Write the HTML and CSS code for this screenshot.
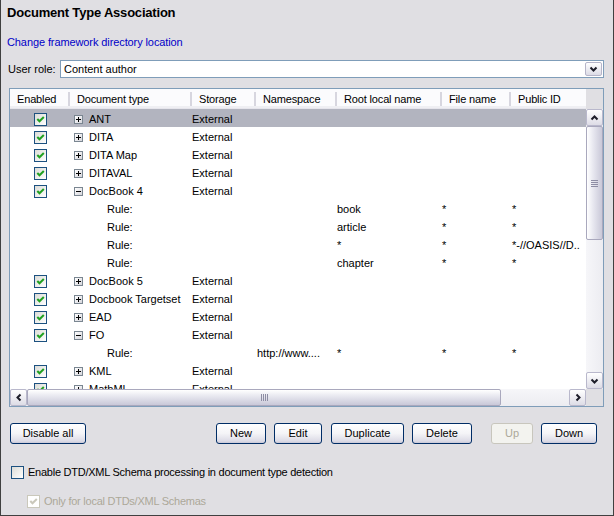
FILE: index.html
```html
<!DOCTYPE html>
<html>
<head>
<meta charset="utf-8">
<link rel="stylesheet" href="styles.css">
</head>
<body>
<div class="panel">
  <h1 class="title">Document Type Association</h1>
  <a class="link" href="#">Change framework directory location</a>
  <div class="role-row">
    <span class="role-label">User role:</span>
    <div class="combo">
      <span class="combo-text">Content author</span>
      <span class="combo-btn"><svg width="9" height="6" viewBox="0 0 9 6"><polyline points="1.5,1.5 4.5,4.5 7.5,1.5" fill="none" stroke="#1e1e2a" stroke-width="2"/></svg></span>
    </div>
  </div>

  <div class="table">
    <div class="header">
      <div class="hcell first">Enabled</div>
      <div class="hcell">Document type</div>
      <div class="hcell">Storage</div>
      <div class="hcell">Namespace</div>
      <div class="hcell">Root local name</div>
      <div class="hcell">File name</div>
      <div class="hcell">Public ID</div>
    </div>
    <div class="corner-top"></div>

    <div class="body">
      <div class="row sel"><div class="c en"><span class="cb"><svg viewBox="0 0 11 11"><path d="M2.3 5 L4.5 7.3 L8.8 3" /></svg></span></div><div class="c dt"><span class="exp plus"></span>ANT</div><div class="c st">External</div><div class="c"></div><div class="c"></div><div class="c"></div><div class="c"></div></div>
      <div class="row"><div class="c en"><span class="cb"><svg viewBox="0 0 11 11"><path d="M2.3 5 L4.5 7.3 L8.8 3" /></svg></span></div><div class="c dt"><span class="exp plus"></span>DITA</div><div class="c st">External</div><div class="c"></div><div class="c"></div><div class="c"></div><div class="c"></div></div>
      <div class="row"><div class="c en"><span class="cb"><svg viewBox="0 0 11 11"><path d="M2.3 5 L4.5 7.3 L8.8 3" /></svg></span></div><div class="c dt"><span class="exp plus"></span>DITA Map</div><div class="c st">External</div><div class="c"></div><div class="c"></div><div class="c"></div><div class="c"></div></div>
      <div class="row"><div class="c en"><span class="cb"><svg viewBox="0 0 11 11"><path d="M2.3 5 L4.5 7.3 L8.8 3" /></svg></span></div><div class="c dt"><span class="exp plus"></span>DITAVAL</div><div class="c st">External</div><div class="c"></div><div class="c"></div><div class="c"></div><div class="c"></div></div>
      <div class="row"><div class="c en"><span class="cb"><svg viewBox="0 0 11 11"><path d="M2.3 5 L4.5 7.3 L8.8 3" /></svg></span></div><div class="c dt"><span class="exp"></span>DocBook 4</div><div class="c st">External</div><div class="c"></div><div class="c"></div><div class="c"></div><div class="c"></div></div>
      <div class="row"><div class="c en"></div><div class="c rule">Rule:</div><div class="c st"></div><div class="c ns"></div><div class="c rt">book</div><div class="c fn">*</div><div class="c pid">*</div></div>
      <div class="row"><div class="c en"></div><div class="c rule">Rule:</div><div class="c st"></div><div class="c ns"></div><div class="c rt">article</div><div class="c fn">*</div><div class="c pid">*</div></div>
      <div class="row"><div class="c en"></div><div class="c rule">Rule:</div><div class="c st"></div><div class="c ns"></div><div class="c rt">*</div><div class="c fn">*</div><div class="c pid">*-//OASIS//D..</div></div>
      <div class="row"><div class="c en"></div><div class="c rule">Rule:</div><div class="c st"></div><div class="c ns"></div><div class="c rt">chapter</div><div class="c fn">*</div><div class="c pid">*</div></div>
      <div class="row"><div class="c en"><span class="cb"><svg viewBox="0 0 11 11"><path d="M2.3 5 L4.5 7.3 L8.8 3" /></svg></span></div><div class="c dt"><span class="exp plus"></span>DocBook 5</div><div class="c st">External</div><div class="c"></div><div class="c"></div><div class="c"></div><div class="c"></div></div>
      <div class="row"><div class="c en"><span class="cb"><svg viewBox="0 0 11 11"><path d="M2.3 5 L4.5 7.3 L8.8 3" /></svg></span></div><div class="c dt"><span class="exp plus"></span>Docbook Targetset</div><div class="c st">External</div><div class="c"></div><div class="c"></div><div class="c"></div><div class="c"></div></div>
      <div class="row"><div class="c en"><span class="cb"><svg viewBox="0 0 11 11"><path d="M2.3 5 L4.5 7.3 L8.8 3" /></svg></span></div><div class="c dt"><span class="exp plus"></span>EAD</div><div class="c st">External</div><div class="c"></div><div class="c"></div><div class="c"></div><div class="c"></div></div>
      <div class="row"><div class="c en"><span class="cb"><svg viewBox="0 0 11 11"><path d="M2.3 5 L4.5 7.3 L8.8 3" /></svg></span></div><div class="c dt"><span class="exp"></span>FO</div><div class="c st">External</div><div class="c"></div><div class="c"></div><div class="c"></div><div class="c"></div></div>
      <div class="row"><div class="c en"></div><div class="c rule">Rule:</div><div class="c st"></div><div class="c ns">http://www....</div><div class="c rt">*</div><div class="c fn">*</div><div class="c pid">*</div></div>
      <div class="row"><div class="c en"><span class="cb"><svg viewBox="0 0 11 11"><path d="M2.3 5 L4.5 7.3 L8.8 3" /></svg></span></div><div class="c dt"><span class="exp plus"></span>KML</div><div class="c st">External</div><div class="c"></div><div class="c"></div><div class="c"></div><div class="c"></div></div>
      <div class="row"><div class="c en"><span class="cb"><svg viewBox="0 0 11 11"><path d="M2.3 5 L4.5 7.3 L8.8 3" /></svg></span></div><div class="c dt"><span class="exp plus"></span>MathML</div><div class="c st">External</div><div class="c"></div><div class="c"></div><div class="c"></div><div class="c"></div></div>
    </div>

    <div class="vscroll">
      <span class="sbtn"><svg width="9" height="6" viewBox="0 0 9 6"><polyline points="1.5,4.5 4.5,1.5 7.5,4.5" fill="none" stroke="#1e1e2a" stroke-width="2"/></svg></span>
      <span class="vthumb"><span class="vgrip"></span></span>
      <span class="vtrack"></span>
      <span class="sbtn"><svg width="9" height="6" viewBox="0 0 9 6"><polyline points="1.5,1.5 4.5,4.5 7.5,1.5" fill="none" stroke="#1e1e2a" stroke-width="2"/></svg></span>
    </div>

    <div class="hscroll">
      <span class="sbtn"><svg width="6" height="9" viewBox="0 0 6 9"><polyline points="4.5,1.5 1.5,4.5 4.5,7.5" fill="none" stroke="#1e1e2a" stroke-width="2"/></svg></span>
      <span class="hthumb"><span class="hgrip"></span></span>
      <span class="htrack"></span>
      <span class="sbtn"><svg width="6" height="9" viewBox="0 0 6 9"><polyline points="1.5,1.5 4.5,4.5 1.5,7.5" fill="none" stroke="#1e1e2a" stroke-width="2"/></svg></span>
    </div>
    <div class="corner-bottom"></div>
  </div>

  <div class="buttons">
    <button class="btn w-disable">Disable all</button>
    <div class="btn-group">
      <button class="btn w-new">New</button>
      <button class="btn w-edit">Edit</button>
      <button class="btn w-dup">Duplicate</button>
      <button class="btn w-del">Delete</button>
      <button class="btn w-up disabled">Up</button>
      <button class="btn w-down">Down</button>
    </div>
  </div>

  <label class="opt opt-main"><span class="cb empty"></span>Enable DTD/XML Schema processing in document type detection</label>
  <label class="opt opt-sub"><span class="cb dis"><svg viewBox="0 0 11 11"><path d="M2.3 5 L4.5 7.3 L8.8 3" /></svg></span>Only for local DTDs/XML Schemas</label>
</div>
</body>
</html>
```

FILE: styles.css
```css
html, body {
  margin: 0;
  padding: 0;
}
body {
  font-family: "Liberation Sans", Arial, sans-serif;
  font-size: 11px;
  color: #000;
}
.panel {
  width: 614px;
  height: 516px;
  box-sizing: border-box;
  background: #e0dfe3;
  border: 1px solid #404040;
  border-top: none;
  display: flex;
  flex-direction: column;
  align-items: flex-start;
  overflow: hidden;
}
.title {
  margin: 0;
  padding: 4px 0 0 6px;
  font-size: 13px;
  font-weight: bold;
  line-height: 17px;
  letter-spacing: -0.2px;
}
.link {
  margin: 14px 0 0 6px;
  line-height: 14px;
  color: #0000c8;
  text-decoration: none;
  letter-spacing: -0.1px;
}
.role-row {
  margin-top: 11px;
  display: flex;
  align-items: center;
  height: 18px;
  width: 603px;
}
.role-label {
  padding-left: 7px;
  flex: 1;
  white-space: nowrap;
}
.combo {
  width: 544px;
  flex: none;
  height: 18px;
  box-sizing: border-box;
  border: 1px solid #7f9db9;
  background: #fff;
  display: flex;
  align-items: center;
  justify-content: space-between;
}
.combo-text {
  padding-left: 3px;
}
.combo-btn {
  width: 17px;
  height: 14px;
  margin-right: 1px;
  box-sizing: border-box;
  border: 1px solid #b6b5c9;
  border-radius: 2px;
  background: linear-gradient(#ffffff, #dcdbe6);
  display: flex;
  align-items: center;
  justify-content: center;
}

/* table */
.table {
  margin: 10px 0 0 8px;
  width: 595px;
  height: 319px;
  box-sizing: border-box;
  border: 1px solid #7f9db9;
  background: #fff;
  display: grid;
  grid-template-columns: 576px 17px;
  grid-template-rows: 20px 280px 17px;
}
.header, .row {
  display: grid;
  grid-template-columns: 58px 122px 64px 81px 105px 69px 77px;
}
.header {
  background: #fbfbfd;
  border-bottom: 1px solid #e6e5ec;
  box-shadow: inset 0 -2px 0 #efeff3;
  align-items: center;
}
.hcell {
  line-height: 14px;
  padding-left: 7px;
  border-left: 2px solid #d7d6df;
  white-space: nowrap;
  letter-spacing: -0.15px;
}
.hcell.first {
  border-left: none;
  padding-left: 7px;
}
.corner-top {
  background: #e0dfe3;
}
.body {
  overflow: hidden;
}
.row {
  height: 18px;
}
.row.sel {
  background: #b2b4bf;
}
.c {
  white-space: nowrap;
  overflow: hidden;
  display: flex;
  align-items: center;
  height: 18px;
  box-sizing: border-box;
  padding-top: 2px;
}
.en {
  padding-left: 24px;
}
.dt {
  padding-left: 6px;
}
.st, .rt, .fn {
  padding-left: 2px;
}
.ns, .pid {
  padding-left: 3px;
}
.rule {
  padding-left: 39px;
}
.cb {
  width: 13px;
  height: 13px;
  box-sizing: border-box;
  border: 1px solid #1c5180;
  background: linear-gradient(135deg, #dcdcd7, #ffffff);
  display: inline-flex;
  flex: none;
}
.cb svg {
  width: 11px;
  height: 11px;
}
.cb svg path {
  fill: none;
  stroke: #21a121;
  stroke-width: 2;
}
.exp {
  width: 9px;
  height: 9px;
  box-sizing: border-box;
  border: 1px solid #7a8691;
  background: linear-gradient(135deg, #ffffff, #d6d6dc);
  margin-right: 6px;
  position: relative;
  flex: none;
}
.exp::before {
  content: "";
  position: absolute;
  left: 1px;
  top: 3px;
  width: 5px;
  height: 1px;
  background: #000;
}
.exp.plus::after {
  content: "";
  position: absolute;
  left: 3px;
  top: 1px;
  width: 1px;
  height: 5px;
  background: #000;
}

/* scrollbars */
.vscroll {
  display: flex;
  flex-direction: column;
  background: #f3f3f6;
}
.hscroll {
  display: flex;
  background: #f3f3f6;
}
.sbtn {
  width: 17px;
  height: 17px;
  box-sizing: border-box;
  border: 1px solid #b9b8cc;
  border-radius: 2px;
  background: linear-gradient(#ffffff, #dddce6);
  display: flex;
  align-items: center;
  justify-content: center;
  flex: none;
}
.vthumb {
  height: 114px;
  box-sizing: border-box;
  border: 1px solid #a9a8bd;
  border-radius: 2px;
  background: linear-gradient(90deg, #ffffff, #e8e8f0 40%, #c9c8d8);
  display: flex;
  align-items: center;
  justify-content: center;
  flex: none;
}
.vgrip {
  width: 7px;
  height: 7px;
  background: repeating-linear-gradient(#8e8da4 0 1px, transparent 1px 2px);
}
.vtrack {
  flex: 1;
  background: linear-gradient(90deg, #f6f6f9, #ececf1);
}
.hthumb {
  width: 474px;
  box-sizing: border-box;
  border: 1px solid #a9a8bd;
  border-radius: 2px;
  background: linear-gradient(#ffffff, #e8e8f0 40%, #c9c8d8);
  display: flex;
  align-items: center;
  justify-content: center;
  flex: none;
}
.hgrip {
  width: 7px;
  height: 7px;
  background: repeating-linear-gradient(90deg, #8e8da4 0 1px, transparent 1px 2px);
}
.htrack {
  flex: 1;
  background: linear-gradient(#f6f6f9, #ececf1);
}
.corner-bottom {
  background: #e0dfe3;
}

/* buttons */
.buttons {
  margin-top: 16px;
  width: 612px;
  display: flex;
  align-items: center;
  box-sizing: border-box;
  padding: 0 16px 0 9px;
}
.btn-group {
  margin-left: auto;
  display: flex;
}
.btn {
  height: 21px;
  box-sizing: border-box;
  border: 1px solid #002d66;
  border-radius: 3px;
  background: linear-gradient(#ffffff 0%, #f4f4f7 50%, #dcdbe6 90%, #c8c7d6 100%);
  font-family: "Liberation Sans", Arial, sans-serif;
  font-size: 11px;
  color: #000;
  padding: 0;
  margin: 0;
  text-align: center;
  line-height: 19px;
}
.btn.disabled {
  border-color: #c8c6bd;
  background: #f3f3ef;
  color: #aca899;
}
.w-disable { width: 76px; }
.w-new { width: 50px; }
.w-edit { width: 48px; margin-left: 8px; }
.w-dup { width: 73px; margin-left: 9px; }
.w-del { width: 60px; margin-left: 8px; }
.w-up { width: 42px; margin-left: 19px; }
.w-down { width: 56px; margin-left: 8px; }

/* options */
.opt {
  display: flex;
  align-items: center;
  height: 14px;
  letter-spacing: -0.25px;
}
.opt-main {
  margin: 21px 0 0 10px;
}
.opt-sub {
  margin: 15px 0 0 26px;
  color: #aca899;
}
.opt .cb {
  margin-right: 4px;
}
.cb.empty {
  background: linear-gradient(135deg, #dcdcd7, #ffffff);
}
.cb.dis {
  border-color: #cac8bb;
  background: #fff;
}
.cb.dis svg path {
  stroke: #cac8bb;
}
```
